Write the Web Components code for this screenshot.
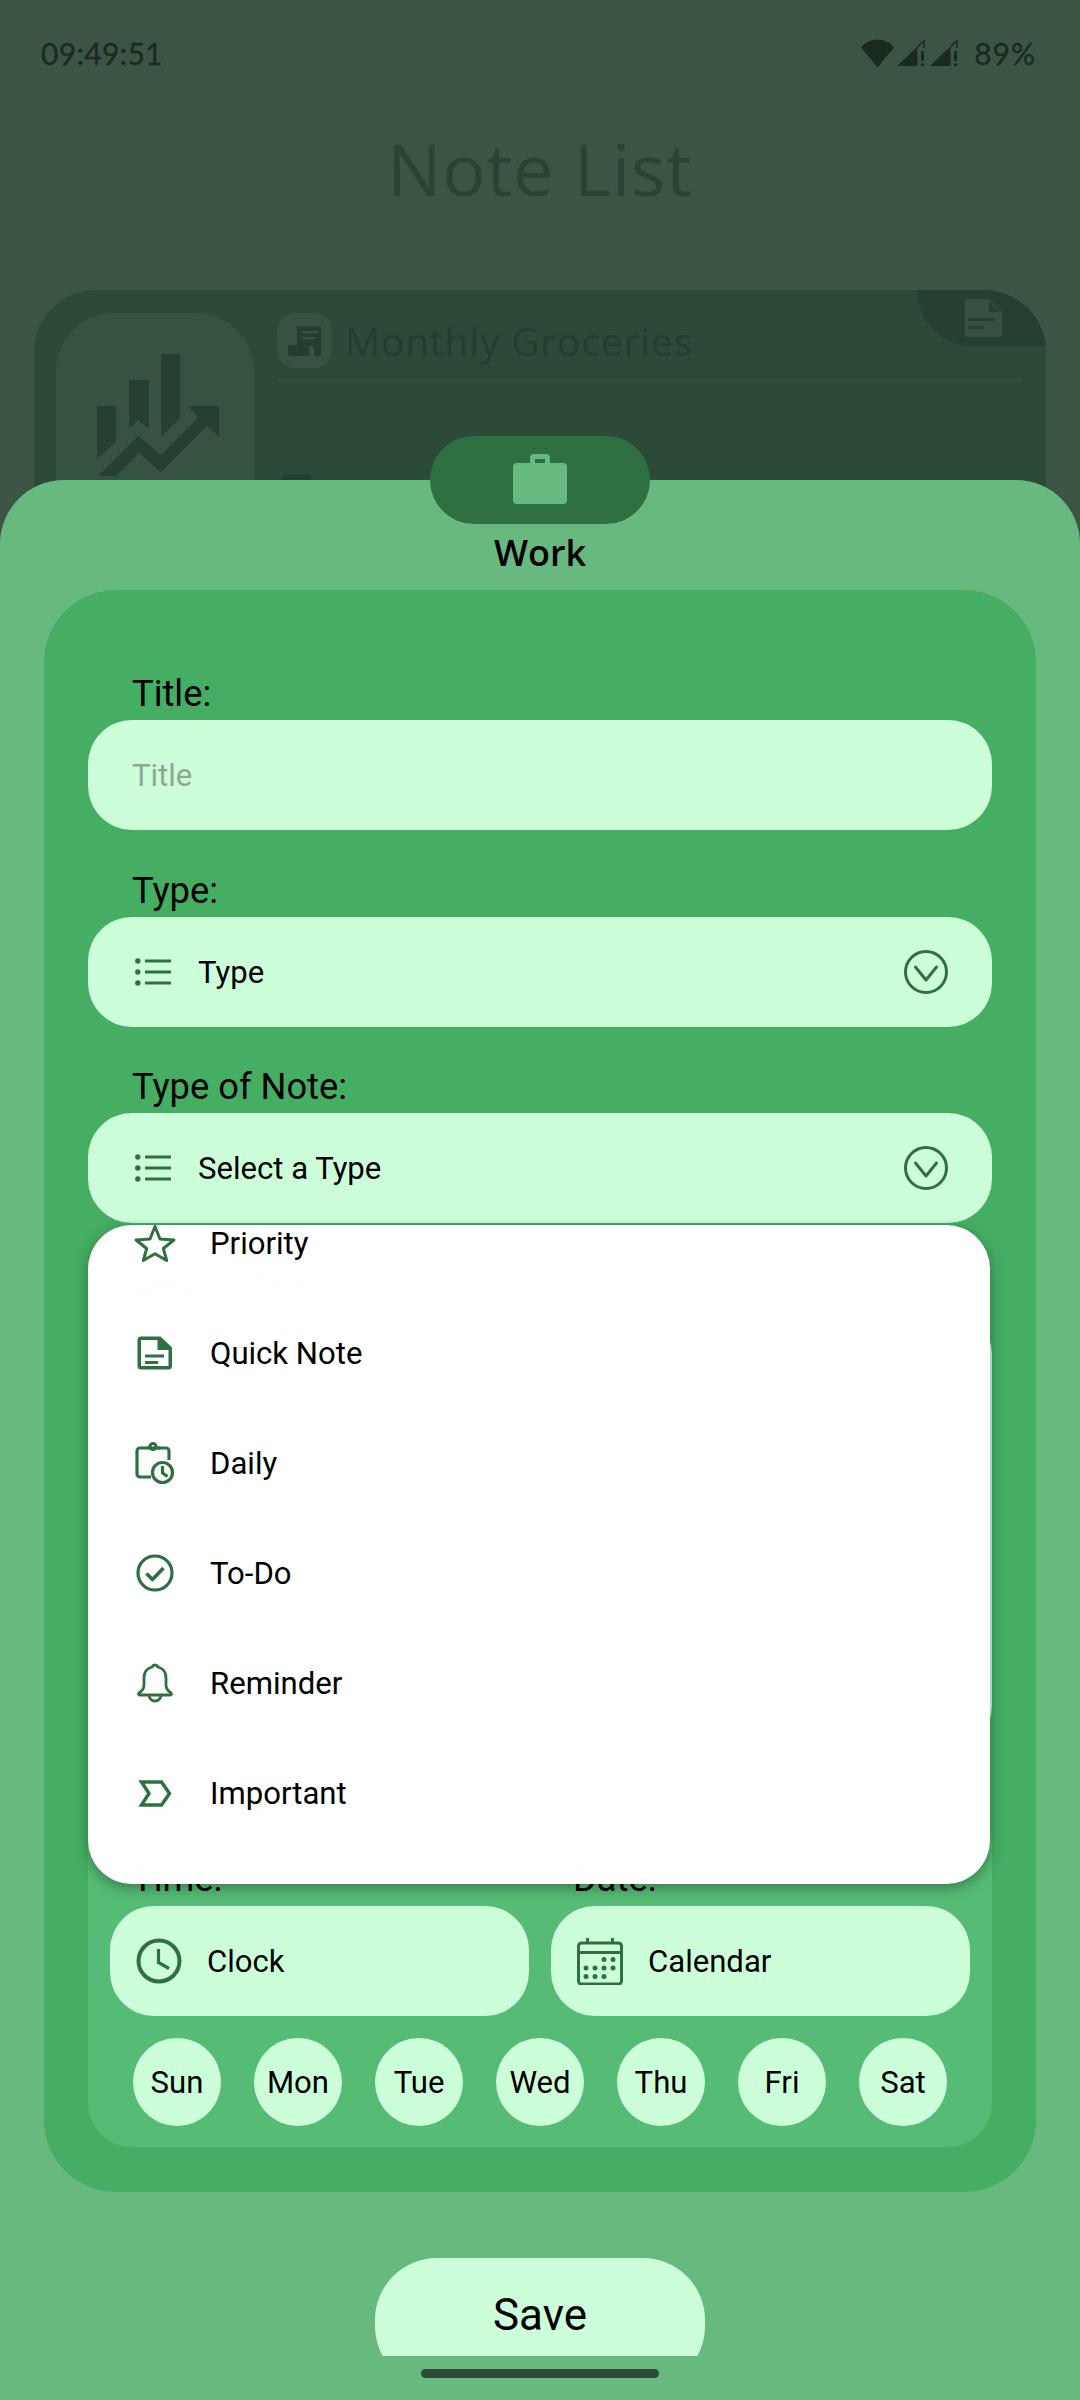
<!DOCTYPE html>
<html><head><meta charset="utf-8"><title>Note List</title>
<style>
html,body{margin:0;padding:0;background:#3c5444}
body{width:1080px;height:2400px;overflow:hidden;font-family:Roboto,"Liberation Sans",sans-serif}
</style></head>
<body>
<note-screen></note-screen>
<script>
const G='#2e7040';
const SIG=`<svg width="30" height="27" viewBox="0 0 30 27"><path fill="#1a2a20" d="M0 26L20.500 6.500V26z"/><path fill="none" stroke="#1a2a20" stroke-width="1.400" d="M20 7l7-6.200V8"/><rect x="24" y="11" width="3" height="10" fill="#1a2a20"/><rect x="24" y="23.500" width="3" height="2.500" fill="#1a2a20"/></svg>`;
const ICONS={
 list:`<svg width="36" height="28" viewBox="0 0 36 28"><g fill="${G}"><circle cx="2.800" cy="3" r="2.700"/><circle cx="2.800" cy="14" r="2.700"/><circle cx="2.800" cy="25" r="2.700"/><rect x="10" y="1.500" width="26" height="3"/><rect x="10" y="12.500" width="26" height="3"/><rect x="10" y="23.500" width="26" height="3"/></g></svg>`,
 chev:`<svg width="46" height="46" viewBox="0 0 46 46" fill="none" stroke="${G}" stroke-width="3"><circle cx="23" cy="23" r="20.500"/><path d="M12.500 18l10.500 13 10.500-13" stroke-linecap="round" stroke-linejoin="round"/></svg>`,
 star:`<svg width="42" height="38" viewBox="0 0 42 38" fill="none" stroke="${G}" stroke-width="3" stroke-linejoin="round"><path d="M21 2.500l5 12.500 14 1-10.700 8.500 3.400 12-11.700-6.800-11.700 6.800 3.400-12L2 16l14-1z"/></svg>`,
 note:`<svg width="36" height="36" viewBox="0 0 36 36"><path fill-rule="evenodd" fill="${G}" d="M4 1.500h19.500L35 12.500V31a3.500 3.500 0 0 1-3.500 3.500H4A3.500 3.500 0 0 1 .5 31V5A3.500 3.500 0 0 1 4 1.500zM4 5v26h27.500V15H20.500V5zM8 19.500h19v3H8zM8 26h13v3H8z"/></svg>`,
 daily:`<svg width="40" height="44" viewBox="0 0 40 44" fill="none" stroke="${G}" stroke-width="3.200"><path d="M13 7H5a3 3 0 0 0-3 3v23a3 3 0 0 0 3 3h11M23 7h8a3 3 0 0 1 3 3v9" stroke-linejoin="round"/><path d="M12 7h13" /><circle cx="18" cy="5.500" r="3"/><circle cx="27.500" cy="31.500" r="10"/><path d="M27.500 25v7l5 3.500"/></svg>`,
 todo:`<svg width="38" height="38" viewBox="0 0 38 38" fill="none" stroke="${G}" stroke-width="3.200"><circle cx="19" cy="19" r="17"/><path d="M10.500 19.500l6 6 11-11.500" stroke-linejoin="round" stroke-width="3.600"/></svg>`,
 bell:`<svg width="36" height="40" viewBox="0 0 36 40" fill="none" stroke="${G}" stroke-width="2.800" stroke-linejoin="round"><path d="M18 2c-1.500 0-2.500 1-3 2C9.500 5.500 7 9.500 7 15v7c0 3-2 6-5 8-.8.700-.5 2 .8 2h30.400c1.300 0 1.600-1.300.8-2-3-2-5-5-5-8v-7c0-5.500-2.500-9.500-8-11-.5-1-1.500-2-3-2z"/><path d="M12 32a6 6 0 0 0 12 0"/></svg>`,
 imp:`<svg width="34" height="27" viewBox="0 0 34 27" fill="none" stroke="${G}" stroke-width="3.400"><path d="M3.500 2h20l8 11.500-8 11.500h-20l7.500-11.500z"/></svg>`,
 clock:`<svg width="46" height="46" viewBox="0 0 46 46" fill="none" stroke="${G}" stroke-width="4"><circle cx="23" cy="23" r="20.500"/><path d="M22.500 11v13.500l10.500 6" stroke-width="3.200"/></svg>`,
 cal:`<svg width="46" height="47" viewBox="0 0 46 47" fill="none" stroke="${G}"><path d="M4.500 5h37a3 3 0 0 1 3 3v35a3 3 0 0 1-3 3h-37a3 3 0 0 1-3-3V8a3 3 0 0 1 3-3z" stroke-width="3"/><path d="M2 14.500h42" stroke-width="3"/><path d="M10.500 0v5M35.500 0v5" stroke-width="3"/><g fill="${G}" stroke="none"><circle cx="27" cy="21.500" r="2.500"/><circle cx="36" cy="21.500" r="2.500"/><circle cx="9" cy="30" r="2.500"/><circle cx="18" cy="30" r="2.500"/><circle cx="27" cy="30" r="2.500"/><circle cx="36" cy="30" r="2.500"/><circle cx="9" cy="38.500" r="2.500"/><circle cx="18" cy="38.500" r="2.500"/><circle cx="27" cy="38.500" r="2.500"/></g></svg>`
};
function def(name,css,html){
 customElements.define(name,class extends HTMLElement{
  connectedCallback(){
   if(this.shadowRoot)return;
   const r=this.attachShadow({mode:'open'});
   r.innerHTML=`<style>${css}</style>`+(typeof html==='function'?html(this):html);
  }
 });
}
def('status-bar',`
 :host{display:flex;align-items:center;justify-content:space-between;height:106px;padding:0 44px 0 41px;box-sizing:border-box;color:#1a2a20;font:400 30px Lato,"Open Sans",sans-serif;letter-spacing:.3px;-webkit-text-stroke:.3px #1a2a20}
 .r{display:flex;align-items:center;gap:3px}
 .p{margin-left:11px;letter-spacing:1px}
 svg{display:block}
`,`<span>09:49:51</span><div class="r">
 <svg width="33" height="29" viewBox="0 0 33 29"><path fill="#1a2a20" d="M0 8.500C4 3.500 10 .5 16.500.5S29 3.500 33 8.500L16.500 28.500z"/></svg>
 ${SIG}${SIG}
 <span class="p">89%</span></div>`);
def('app-header',`
 :host{display:flex;align-items:center;justify-content:center;height:130px;padding-bottom:6px;border-bottom:1px solid #3f5848;box-sizing:border-box;color:#2a4434;font:400 72px "Open Sans","Noto Sans",sans-serif;letter-spacing:.8px}
`,`Note List`);
def('note-card',`
 :host{display:flex;position:relative;margin:54px 34px 0;height:400px;background:#2c4a38;border-radius:62px;overflow:hidden;padding:23px 24px 0 22px;box-sizing:border-box;gap:23px}
 .big{width:198px;height:300px;background:#365240;border-radius:58px;flex:none;position:relative;overflow:hidden}
 .big svg{position:absolute;left:-26px;top:-33px}
 .main{flex:1;min-width:0}
 .head{display:flex;align-items:center;gap:13px;height:55px}
 .ic{width:55px;height:55px;background:#365240;border-radius:18px;display:flex;align-items:center;justify-content:center}
 .t{font:400 39px "Open Sans","Noto Sans",sans-serif;color:#233d2e;letter-spacing:.8px}
 hr{border:0;height:3px;background:#324e3d;margin:11px 0 0}
 .tag{position:absolute;right:0;top:0;width:128px;height:56px;background:#253f30;border-bottom-left-radius:54px;display:flex;align-items:center;justify-content:center;padding-left:4px;box-sizing:border-box}
 .cal{width:30px;height:26px;background:#233d2e;border-radius:5px;margin:92px 0 0 5px}
`,`<div class="big"><svg width="400" height="220" viewBox="0 0 400 220"><g fill="#263f30"><path d="M67 126h19v36l-19 17z"/><path d="M99 100h20v49l-11-9-9 8z"/><path d="M131 74h19v64l-19 19z"/><path d="M68 196l40-40 23 19 37-37-10-12h31v31l-12-11-46 46-22-19-23 23z"/></g></svg></div>
 <div class="main"><div class="head"><div class="ic"><svg width="34" height="32" viewBox="0 0 34 32"><path fill="#233d2e" d="M9 1l2 1 2-1 2 1 2-1 2 1 2-1 2 1 2-1 2 1 2-1 2 1 2-1v27a3.500 3.500 0 0 1-7 0v-3a4 4 0 0 0-4-4H9zM0 20h19a2 2 0 0 1 2 2v6a3 3 0 0 0 1 3H4a4 4 0 0 1-4-4z"/><path fill="#365240" d="M14 6h16v2.200H14zM14 12h13v2.200H14z"/></svg></div><span class="t">Monthly Groceries</span></div><hr><div class="cal"></div></div>
 <div class="tag"><svg width="38" height="38" viewBox="0 0 38 38"><path fill="#335040" d="M3 0h21l13 13v22a3 3 0 0 1-3 3H3a3 3 0 0 1-3-3V3a3 3 0 0 1 3-3z"/><path fill="#253f30" d="M3 19h27v3H3zM3 27h16v3H3zM24 2v11h11z"/></svg></div>`);
def('sheet-panel',`
 :host{position:absolute;left:0;right:0;top:480px;bottom:0;display:flex;flex-direction:column;align-items:center;background:#68b97f;border-radius:64px 64px 0 0;color:#000}
 .pill{width:220px;height:88px;margin-top:-44px;border-radius:44px;background:#2e7040;display:flex;align-items:center;justify-content:center;padding-bottom:2px;box-sizing:border-box;flex:none}
 .name{font:600 36px "Open Sans","Noto Sans",sans-serif;height:66px;line-height:58px;flex:none}
 .home{width:238px;height:9px;border-radius:5px;background:#2e4a38;margin-top:13px;flex:none}
 .clip{height:98px;width:330px;overflow:hidden;margin-top:66px;flex:none}
 .save{height:130px;border-radius:62px;background:#ccffd9;display:flex;justify-content:center;font:400 44px Roboto,sans-serif;line-height:114px}
 svg{display:block}
`,`<div class="pill"><svg width="54" height="52" viewBox="0 0 54 52"><path fill="#68b97f" fill-rule="evenodd" d="M17 10V5a4 4 0 0 1 4-4h12a4 4 0 0 1 4 4v5h13a4 4 0 0 1 4 4v33a4 4 0 0 1-4 4H4a4 4 0 0 1-4-4V14a4 4 0 0 1 4-4zM22 10h10V6H22z"/></svg></div>
 <div class="name">Work</div><slot></slot><div class="clip"><div class="save">Save</div></div><div class="home"></div>`);
def('form-card',`
 :host{display:block;box-sizing:border-box;width:992px;height:1602px;flex:none;background:#45ae63;border-radius:72px;padding:78px 44px 0;position:relative}
`,`<slot></slot>`);
def('field-label',`
 :host{display:block;height:52px;margin:0 0 0 44px;font:400 36.3px/52px Roboto,sans-serif;color:#000;white-space:nowrap}
`,`<slot></slot>`);
def('form-field',`
 :host{display:flex;align-items:center;height:110px;background:#ccffd9;border-radius:44px;font:400 31.1px Roboto,sans-serif;color:#000;margin-bottom:var(--mb,35px);padding:0 43px 0 47px;box-sizing:border-box}
 .tx{margin-left:27px;flex:1}
 .ph{margin-left:-3px;color:#8fa896;flex:1}
 svg{display:block;flex:none}
`,(h)=>h.hasAttribute('placeholder')?`<span class="ph">${h.getAttribute('placeholder')}</span>`:`${ICONS.list}<span class="tx">${h.getAttribute('text')}</span>${ICONS.chev}`);
def('drop-menu',`
 :host{position:absolute;left:44px;top:635px;width:902px;height:659px;background:rgba(255,255,255,.995);border-radius:44px;box-shadow:0 4px 14px rgba(0,0,0,.35);overflow:hidden;z-index:2;display:block}
 .list{margin-top:-37px}
`,`<div class="list"><slot></slot></div>`);
def('menu-item',`
 :host{display:flex;align-items:center;height:110px;font:400 31.1px Roboto,sans-serif;color:#000;position:relative}
 .i{width:122px;display:flex;justify-content:center;padding-left:12px;box-sizing:border-box;flex:none;height:46px;align-items:center}
 svg{display:block}
`,(h)=>`<span class="i">${ICONS[h.getAttribute('icon')]}</span><slot></slot>`);
def('desc-box',`
 :host{display:block;height:440px;background:#ccffd9;border-radius:44px;margin-bottom:35px}
`,``);
def('alarm-panel',`
 :host{display:block;height:362px;background:#56bc75;border-radius:60px 60px 44px 44px;padding:0 22px;box-sizing:border-box}
 .a{height:69px;font:400 36.3px/46px Roboto,sans-serif;margin-left:22px}
 .cols{display:grid;grid-template-columns:1fr 1fr;column-gap:22px}
 .days{display:flex;justify-content:center;gap:33px;margin-top:22px}
`,`<div class="a">Set an Alarm:</div><div class="cols"><slot name="cols"></slot></div><div class="days"><slot></slot></div>`);
def('pick-col',`
 :host{display:block}
 .l{height:52px;font:400 36.3px/50px Roboto,sans-serif;margin-left:22px;white-space:nowrap}
 .f{display:flex;align-items:center;height:110px;background:#ccffd9;border-radius:44px;font:400 31.1px Roboto,sans-serif;padding-left:26px;gap:25px}
 svg{display:block;flex:none}
`,(h)=>`<div class="l">${h.getAttribute('label')}</div><div class="f">${ICONS[h.getAttribute('icon')]}<span>${h.getAttribute('text')}</span></div>`);
def('day-chip',`
 :host{display:flex;align-items:center;justify-content:center;width:88px;height:88px;border-radius:50%;background:#ccffd9;font:400 31.1px Roboto,sans-serif;color:#000}
`,`<slot></slot>`);
def('note-screen',`
 :host{display:block;position:relative;width:1080px;height:2400px;overflow:hidden;background:#3c5444}
`,`<status-bar></status-bar><app-header></app-header><note-card></note-card>
<sheet-panel><form-card>
 <field-label>Title:</field-label><form-field placeholder="Title"></form-field>
 <field-label>Type:</field-label><form-field text="Type" style="--mb:34px"></form-field>
 <field-label>Type of Note:</field-label><form-field text="Select a Type"></form-field>
 <field-label>Description:</field-label><desc-box></desc-box>
 <alarm-panel>
  <pick-col slot="cols" label="Time:" icon="clock" text="Clock"></pick-col>
  <pick-col slot="cols" label="Date:" icon="cal" text="Calendar"></pick-col>
  <day-chip>Sun</day-chip><day-chip>Mon</day-chip><day-chip>Tue</day-chip><day-chip>Wed</day-chip><day-chip>Thu</day-chip><day-chip>Fri</day-chip><day-chip>Sat</day-chip>
 </alarm-panel>
 <drop-menu>
  <menu-item icon="star">Priority</menu-item><menu-item icon="note">Quick Note</menu-item><menu-item icon="daily">Daily</menu-item><menu-item icon="todo">To-Do</menu-item><menu-item icon="bell">Reminder</menu-item><menu-item icon="imp">Important</menu-item>
 </drop-menu>
</form-card></sheet-panel>`);
</script>
</body></html>
